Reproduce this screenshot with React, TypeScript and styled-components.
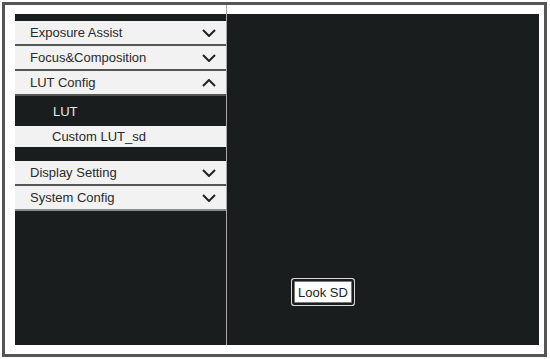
import styled, { createGlobalStyle } from 'styled-components';

const GlobalStyle = createGlobalStyle`
  body {
    margin: 0;
    background: #ffffff;
    font-family: "Liberation Sans", Arial, sans-serif;
  }
`;

type Menu = { label: string; open?: boolean; last?: boolean };

function Chevron({ up }: { up?: boolean }) {
  return (
    <svg width="14" height="8" viewBox="0 0 14 8">
      <polyline
        points={up ? '1,7 7,1 13,7' : '1,1 7,7 13,1'}
        fill="none"
        stroke="#222"
        strokeWidth="2"
      />
    </svg>
  );
}

function Header({ label, open, last }: Menu) {
  return (
    <HeaderRow $last={last}>
      <span>{label}</span>
      <Chevron up={open} />
    </HeaderRow>
  );
}

function App() {
  return (
    <>
      <GlobalStyle />
      <Frame>
        <Sidebar>
          <Header label="Exposure Assist" />
          <Header label="Focus&Composition" />
          <Header label="LUT Config" open />
          <SubItem $active>LUT</SubItem>
          <SubItem>Custom LUT_sd</SubItem>
          <Gap />
          <Header label="Display Setting" />
          <Header label="System Config" last />
        </Sidebar>
        <Divider />
        <Preview>
          <LookButton>Look SD</LookButton>
        </Preview>
      </Frame>
    </>
  );
}

export default App;

const Frame = styled.div`
  margin: 2px 0 0 2px;
  width: 545px;
  height: 355px;
  box-sizing: border-box;
  border: 3px solid #555;
  display: flex;
  padding: 0 5px 9px 10px;
`;

const Sidebar = styled.div`
  width: 211px;
  margin-top: 9px;
  padding-top: 7px;
  background: #1a1d1e;
  display: flex;
  flex-direction: column;
`;

const HeaderRow = styled.div<{ $last?: boolean }>`
  height: 23px;
  flex-shrink: 0;
  background: #f2f2f2;
  border-bottom: 2px solid ${(p) => (p.$last ? '#8a8a8a' : '#555')};
  display: flex;
  align-items: center;
  justify-content: space-between;
  padding: 0 10px 0 15px;
  font-size: 13px;
  color: #2a2a2a;
`;

const SubItem = styled.div<{ $active?: boolean }>`
  height: ${(p) => (p.$active ? '30px' : '21px')};
  flex-shrink: 0;
  display: flex;
  align-items: center;
  padding-left: ${(p) => (p.$active ? '38px' : '37px')};
  font-size: 13px;
  background: ${(p) => (p.$active ? '#1a1d1e' : '#f2f2f2')};
  color: ${(p) => (p.$active ? '#e8e8e8' : '#2a2a2a')};
`;

const Gap = styled.div`
  height: 14px;
  flex-shrink: 0;
`;

const Divider = styled.div`
  width: 1px;
  background: #a8a8a8;
`;

const Preview = styled.div`
  flex: 1;
  margin-top: 9px;
  background: #1a1d1e;
  padding: 267px 0 0 67px;
  display: flex;
  align-items: flex-start;
`;

const LookButton = styled.button`
  width: 58px;
  height: 22px;
  padding: 0;
  background: #ffffff;
  border: 1px solid #777;
  border-radius: 1px;
  box-shadow: 0 0 0 2px #1a1d1e, 0 0 0 3px #d8d8d8;
  font-family: "Liberation Sans", Arial, sans-serif;
  font-size: 13px;
  color: #222;
`;
